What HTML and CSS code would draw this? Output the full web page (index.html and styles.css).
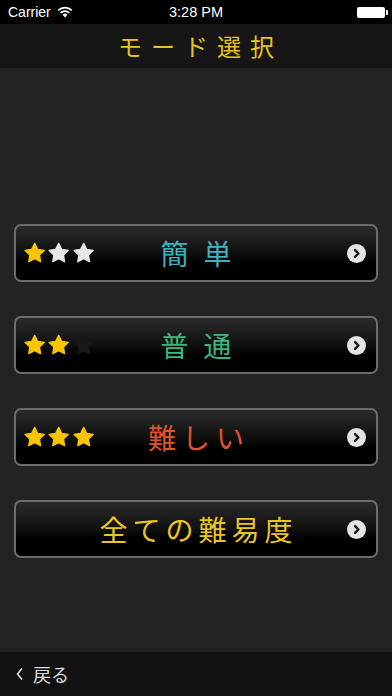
FILE: index.html
```html
<!DOCTYPE html>
<html lang="ja">
<head>
  <meta charset="UTF-8">
  <meta name="viewport" content="width=device-width, initial-scale=1.0">
  <title>モード選択</title>
  <link rel="stylesheet" href="styles.css">
</head>
<body>
  <div class="screen">
    <div class="status">
      <div class="carrier">
        Carrier
        <svg class="wifi" width="16" height="12" viewBox="0 0 16 12">
          <path d="M8 11.5 L5.6 8.8 A3.4 3.4 0 0 1 10.4 8.8 Z" fill="#fff"/>
          <path d="M3.6 6.9 A6.2 6.2 0 0 1 12.4 6.9" stroke="#fff" stroke-width="1.7" fill="none"/>
          <path d="M1.2 4.4 A9.6 9.6 0 0 1 14.8 4.4" stroke="#fff" stroke-width="1.7" fill="none"/>
        </svg>
      </div>
      <div class="clock">3:28 PM</div>
      <div class="battery"><span></span></div>
    </div>

    <div class="header">モード選択</div>

    <div class="main">
      <div class="mode">
        <div class="stars">
          <svg viewBox="0 0 20 20"><polygon class="on" points="10,1 12.82,6.62 19.03,7.56 14.56,11.98 15.58,18.19 10,15.3 4.42,18.19 5.44,11.98 0.97,7.56 7.18,6.62"/></svg>
          <svg viewBox="0 0 20 20"><polygon class="off" points="10,1 12.82,6.62 19.03,7.56 14.56,11.98 15.58,18.19 10,15.3 4.42,18.19 5.44,11.98 0.97,7.56 7.18,6.62"/></svg>
          <svg viewBox="0 0 20 20"><polygon class="off" points="10,1 12.82,6.62 19.03,7.56 14.56,11.98 15.58,18.19 10,15.3 4.42,18.19 5.44,11.98 0.97,7.56 7.18,6.62"/></svg>
        </div>
        <div class="label easy">簡単</div>
        <div class="go"><svg viewBox="0 0 20 20"><path d="M8.5 6.5 L12 10 L8.5 13.5"/></svg></div>
      </div>

      <div class="mode">
        <div class="stars">
          <svg viewBox="0 0 20 20"><polygon class="on" points="10,1 12.82,6.62 19.03,7.56 14.56,11.98 15.58,18.19 10,15.3 4.42,18.19 5.44,11.98 0.97,7.56 7.18,6.62"/></svg>
          <svg viewBox="0 0 20 20"><polygon class="on" points="10,1 12.82,6.62 19.03,7.56 14.56,11.98 15.58,18.19 10,15.3 4.42,18.19 5.44,11.98 0.97,7.56 7.18,6.62"/></svg>
          <svg viewBox="0 0 20 20"><polygon class="ghost" points="10,1 12.82,6.62 19.03,7.56 14.56,11.98 15.58,18.19 10,15.3 4.42,18.19 5.44,11.98 0.97,7.56 7.18,6.62"/></svg>
        </div>
        <div class="label normal">普通</div>
        <div class="go"><svg viewBox="0 0 20 20"><path d="M8.5 6.5 L12 10 L8.5 13.5"/></svg></div>
      </div>

      <div class="mode">
        <div class="stars">
          <svg viewBox="0 0 20 20"><polygon class="on" points="10,1 12.82,6.62 19.03,7.56 14.56,11.98 15.58,18.19 10,15.3 4.42,18.19 5.44,11.98 0.97,7.56 7.18,6.62"/></svg>
          <svg viewBox="0 0 20 20"><polygon class="on" points="10,1 12.82,6.62 19.03,7.56 14.56,11.98 15.58,18.19 10,15.3 4.42,18.19 5.44,11.98 0.97,7.56 7.18,6.62"/></svg>
          <svg viewBox="0 0 20 20"><polygon class="on" points="10,1 12.82,6.62 19.03,7.56 14.56,11.98 15.58,18.19 10,15.3 4.42,18.19 5.44,11.98 0.97,7.56 7.18,6.62"/></svg>
        </div>
        <div class="label hard">難しい</div>
        <div class="go"><svg viewBox="0 0 20 20"><path d="M8.5 6.5 L12 10 L8.5 13.5"/></svg></div>
      </div>

      <div class="mode">
        <div class="stars"></div>
        <div class="label all">全ての難易度</div>
        <div class="go"><svg viewBox="0 0 20 20"><path d="M8.5 6.5 L12 10 L8.5 13.5"/></svg></div>
      </div>
    </div>

    <div class="footer">
      <svg class="back" width="10" height="16" viewBox="0 0 10 16"><path d="M7 2.5 L2.5 8 L7 13.5"/></svg>
      <span>戻る</span>
    </div>
  </div>
</body>
</html>
```

FILE: styles.css
```css
*{
  margin: 0;
  padding: 0;
  box-sizing: border-box;
}
body{
  background: #232323;
  font-family: "Noto Sans CJK JP", "Noto Sans", sans-serif;
}
.screen{
  width: 392px;
  height: 696px;
  display: flex;
  flex-direction: column;
  overflow: hidden;
}

/* status bar */
.status{
  height: 24px;
  background: #000;
  color: #fff;
  display: flex;
  align-items: center;
  justify-content: space-between;
  padding: 0 7px 0 8px;
  font-family: "Liberation Sans", Arial, sans-serif;
  font-size: 14px;
  position: relative;
}
.carrier{
  display: flex;
  align-items: center;
  gap: 6px;
}
.clock{
  position: absolute;
  left: 0;
  right: 0;
  text-align: center;
  font-size: 14.5px;
}
.battery{
  width: 28px;
  height: 11px;
  border-radius: 2px;
  background: #fff;
  position: relative;
}
.battery span{
  position: absolute;
  right: -3px;
  top: 3px;
  width: 2px;
  height: 5px;
  background: #fff;
  border-radius: 0 1px 1px 0;
}

/* title */
.header{
  height: 44px;
  background: #161616;
  color: #e8c41c;
  font-size: 24px;
  letter-spacing: 9px;
  padding-left: 9px;
  text-align: center;
  line-height: 44px;
}

/* mode list */
.main{
  flex: 1;
  padding: 156px 14px 0 14px;
  display: flex;
  flex-direction: column;
  gap: 34px;
}
.mode{
  height: 58px;
  border: 2px solid #6c6c6c;
  border-radius: 7px;
  background: linear-gradient(#2b2b2b, #101010 50%, #000 70%, #000);
  display: flex;
  align-items: center;
  position: relative;
  padding: 0 10px 0 8px;
}
.stars{
  display: flex;
  gap: 3px;
  width: 70px;
}
.stars svg{
  width: 22px;
  height: 22px;
}
.stars polygon{
  stroke-width: 1.2;
  stroke-linejoin: round;
}
.on{
  fill: #f8c600;
  stroke: #f8c600;
}
.off{
  fill: #e8e8e8;
  stroke: #e8e8e8;
}
.ghost{
  fill: #181818;
  stroke: #181818;
}
.label{
  position: absolute;
  left: 0;
  right: 0;
  text-align: center;
  font-size: 28px;
  line-height: 54px;
}
.easy{
  color: #3fb1c0;
  letter-spacing: 15px;
  padding-left: 15px;
}
.normal{
  color: #3cb67e;
  letter-spacing: 15px;
  padding-left: 15px;
}
.hard{
  color: #e0542c;
  letter-spacing: 6px;
  padding-left: 6px;
}
.all{
  color: #ecc61e;
  letter-spacing: 5px;
  padding-left: 5px;
}
.go{
  margin-left: auto;
  width: 19px;
  height: 19px;
  border-radius: 50%;
  background: #e4e4e4;
  position: relative;
  z-index: 1;
}
.go svg{
  display: block;
  width: 19px;
  height: 19px;
}
.go path{
  fill: none;
  stroke: #1a1a1a;
  stroke-width: 2.6;
  stroke-linecap: round;
  stroke-linejoin: round;
}

/* bottom bar */
.footer{
  height: 44px;
  background: #121212;
  display: flex;
  align-items: center;
  gap: 8px;
  padding-left: 15px;
  color: #dedede;
  font-size: 18px;
}
.back path{
  fill: none;
  stroke: #dedede;
  stroke-width: 1.6;
}
```
